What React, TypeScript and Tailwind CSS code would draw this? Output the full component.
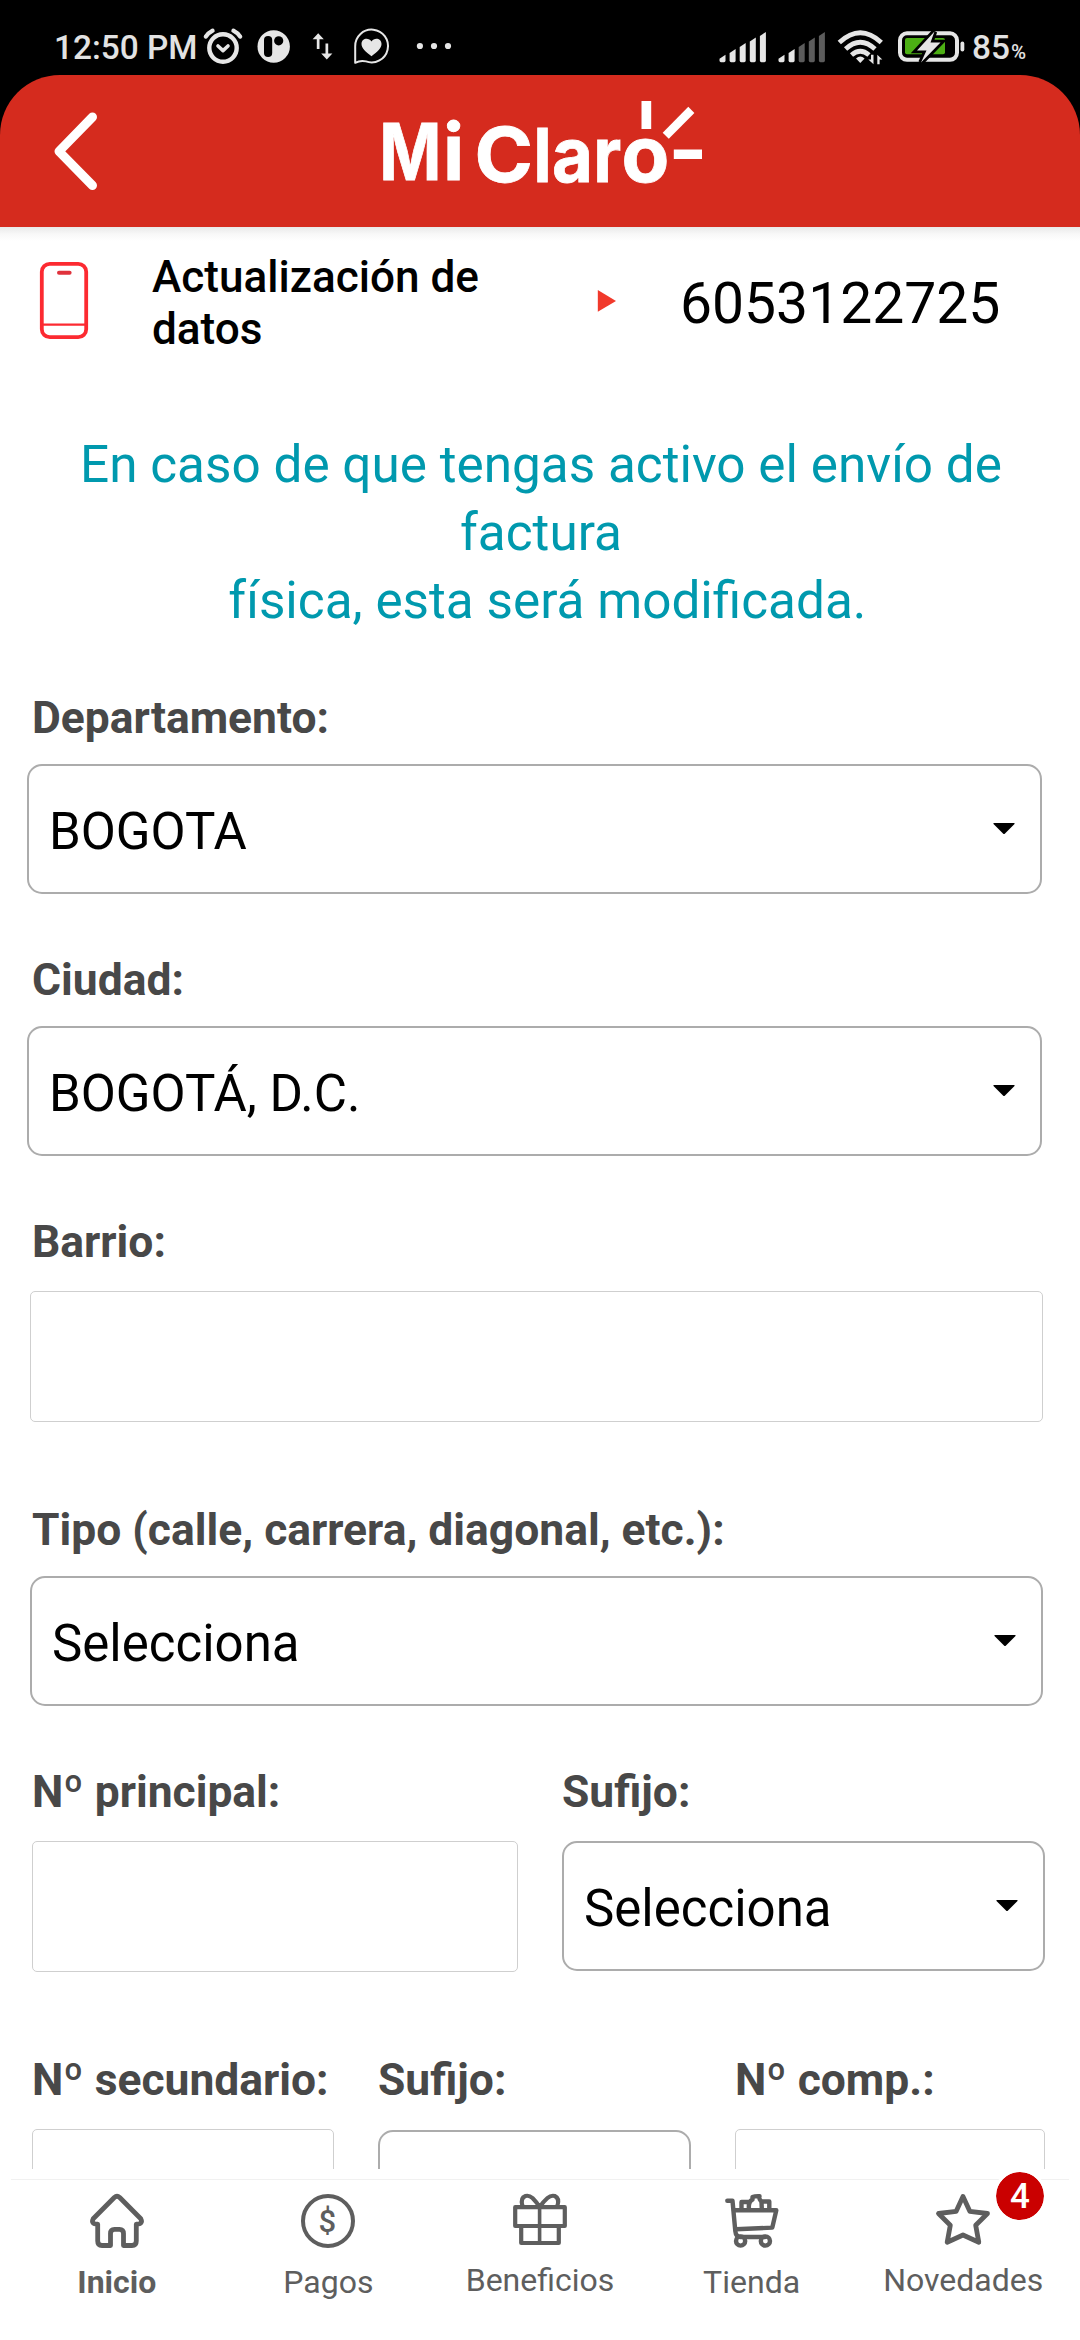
import React from "react";

function StatusIconsLeft() {
  return (
    <svg className="block shrink-0" width="256" height="50" viewBox="200 20 256 50" fill="none">
      <circle cx="223" cy="48" r="13.7" stroke="#e6e6e6" strokeWidth="4.4" />
      <path d="M218 46l5 4.6 5-4.6" stroke="#e6e6e6" strokeWidth="3.6" strokeLinecap="round" strokeLinejoin="round" />
      <path d="M205.8 36.6Q208 33 212.6 30.6M240.2 36.6Q238 33 233.4 30.6" stroke="#e6e6e6" strokeWidth="4.2" strokeLinecap="round" />
      <circle cx="273.7" cy="46.5" r="16.2" fill="#e6e6e6" />
      <rect x="264" y="36" width="8.2" height="21" rx="4.1" fill="#000" />
      <circle cx="278.7" cy="40.8" r="4.6" fill="#000" />
      <path d="M318.2 33.2l5.6 6h-4.3V49h-2.7v-9.8h-4.2zM326.8 59.4l-5.6-6h4.3V43.6h2.7v9.8h4.2z" fill="#e6e6e6" />
      <path d="M355.2 62.8V46.3A16.4 16.4 0 1 1 366 61.4Q360.5 60 355.2 62.8z" stroke="#e6e6e6" strokeWidth="2" strokeLinejoin="round" />
      <path d="M371.5 56.2c-6-4.6-10-8-10-12.2 0-6 7.3-6.7 10-2.6 2.7-4.1 10-3.4 10 2.6 0 4.2-4 7.6-10 12.2z" fill="#e6e6e6" />
      <circle cx="419.9" cy="46" r="3.1" fill="#e6e6e6" />
      <circle cx="434" cy="46" r="3.1" fill="#e6e6e6" />
      <circle cx="448" cy="46" r="3.1" fill="#e6e6e6" />
    </svg>
  );
}

const bars = [54.7, 49, 43, 37.5, 32];

function Signal({ x, lit }: { x: number; lit: number }) {
  return (
    <>
      {bars.map((top, i) => {
        const l = x + i * 10.1;
        return (
          <path
            key={top}
            d={`M${l} ${top + 4}L${l + 6} ${top}V60.5Q${l + 6} 62.2 ${l + 4.5} 62.2H${l + 1.5}Q${l} 62.2 ${l} 60.5Z`}
            fill={i < lit ? "#e6e6e6" : "#5c5c5c"}
          />
        );
      })}
    </>
  );
}

function StatusIconsRight() {
  return (
    <svg className="block shrink-0" width="252" height="50" viewBox="716 20 252 50" fill="none">
      <Signal x={719.5} lit={5} />
      <Signal x={778.5} lit={2} />
      <g stroke="#e6e6e6" strokeWidth="4.8">
        <path d="M839.3 42.5Q860.3 23 881.3 42.5" />
        <path d="M845.6 49Q860.3 35.5 875 49" />
        <path d="M851.5 55Q860.3 47.5 869 55" />
      </g>
      <path d="M856 58.5Q860.3 54.5 864.6 58.5L860.3 63z" fill="#e6e6e6" />
      <path d="M873.5 54.8V64.3L868.3 59.6H871V54.8zM877.3 64.3V54.8l5 4.7h-2.7v4.8z" fill="#e6e6e6" />
      <rect x="900" y="33.3" width="57" height="26.5" rx="7" stroke="#e6e6e6" strokeWidth="4" />
      <rect x="960.5" y="41.5" width="3.8" height="10" rx="1.9" fill="#e6e6e6" />
      <rect x="905" y="38" width="40" height="16.2" rx="2" fill="#4caf14" />
      <path
        d="M934.5 31.5L917 50.5h9.5L921 62.5 940.5 42.5h-10z"
        fill="#e6e6e6"
        stroke="#000"
        strokeWidth="5.5"
        paintOrder="stroke"
      />
    </svg>
  );
}

function BackIcon() {
  return (
    <svg className="block" width="46" height="80" viewBox="52 112 46 80" fill="none">
      <path d="M92.5 117L59 151.3 92.5 185.5" stroke="#fff" strokeWidth="9" strokeLinecap="round" strokeLinejoin="round" />
    </svg>
  );
}

function Logo() {
  return (
    <svg className="block overflow-visible" width="330" height="90" viewBox="378 101 330 90" fill="#fff">
      <g style={{ fontFamily: "Inter, sans-serif" }} fontWeight="700" stroke="#fff" strokeWidth="0.8">
        <text x="379.3" y="180" fontSize="78" textLength="62.2" lengthAdjust="spacingAndGlyphs">M</text>
        <text x="443" y="180" fontSize="78">i</text>
        <text x="474.5" y="181.6" fontSize="75.5" textLength="58.5" lengthAdjust="spacingAndGlyphs">C</text>
        <text x="533.5" y="182" fontSize="74.5" textLength="18" lengthAdjust="spacingAndGlyphs">l</text>
        <text x="552" y="181.8" fontSize="76.5" textLength="41" lengthAdjust="spacingAndGlyphs">a</text>
        <text x="593.3" y="182" fontSize="76.5" textLength="28" lengthAdjust="spacingAndGlyphs">r</text>
        <text x="621.5" y="181.8" fontSize="78">o</text>
      </g>
      <rect x="641.5" y="101" width="9.7" height="28" />
      <path d="M662.7 132.8L688.3 106.8 694.4 113 668.8 138.8z" />
      <rect x="673.8" y="149.5" width="28.2" height="9.5" />
    </svg>
  );
}

function PhoneIcon() {
  return (
    <svg className="block" width="50" height="80" viewBox="39 261 50 80" fill="none" stroke="#fc2a31">
      <rect x="41.8" y="263.8" width="44.4" height="73.4" rx="8" strokeWidth="3.8" />
      <path d="M42 324.6H86" strokeWidth="2.4" />
      <path d="M59 272.8H69.6" stroke="#e0323c" strokeWidth="4" strokeLinecap="round" />
    </svg>
  );
}

function Caret() {
  return (
    <svg className="absolute right-[25px] top-[56.5px] block" width="22" height="12" viewBox="0 0 22 12">
      <path d="M0.5 0H21.5V1L12 10.5Q11 11.5 10 10.5L0.5 1z" fill="#000" />
    </svg>
  );
}

function SelectBox({ value, className = "" }: { value: string; className?: string }) {
  return (
    <div className={`relative flex h-[130px] items-center rounded-[15px] border-2 border-[#acacac] bg-white pl-[20px] ${className}`}>
      <span className="mt-[6px] text-[51px] leading-[60px] text-black">{value}</span>
      <Caret />
    </div>
  );
}

function InputBox({ className = "" }: { className?: string }) {
  return <div className={`h-[131px] rounded-[5px] border border-[#cfcfcf] bg-white ${className}`} />;
}

function Label({ children }: { children: React.ReactNode }) {
  return <div className="h-[52px] whitespace-nowrap text-[44.4px] font-bold leading-[52px] text-[#484848]">{children}</div>;
}

function HomeIcon() {
  return (
    <svg className="block" width="58" height="58" viewBox="88 2192 58 58" fill="none" stroke="#5e5e5e" strokeWidth="4.8" strokeLinejoin="round">
      <path d="M114.3 2197.5Q117 2195 119.7 2197.5L140.8 2218.8Q143.5 2224 136.3 2224.2V2241Q136.3 2245.5 132 2245.5H123.5V2233.5Q123.5 2229.3 119.5 2229.3H114.5Q110.5 2229.3 110.5 2233.5V2245.5H102Q97.7 2245.5 97.7 2241V2224.2Q90.5 2224 93.2 2218.8z" />
    </svg>
  );
}

function PayIcon() {
  return (
    <span className="flex h-[58px] w-[58px] items-center justify-center">
      <span className="flex h-[54px] w-[54px] items-center justify-center rounded-full border-[4.6px] border-[#5e5e5e] text-[31px] font-medium leading-none text-[#5e5e5e]">
        <span className="-ml-[2px]">$</span>
      </span>
    </span>
  );
}

function GiftIcon() {
  return (
    <svg className="block" width="58" height="58" viewBox="511 2192 58 58" fill="none" stroke="#5e5e5e" strokeWidth="4.2" strokeLinejoin="round">
      <path d="M515.2 2207.2H564.8V2226H515.2z" />
      <path d="M521.2 2226V2243H558.8V2226" />
      <path d="M539.6 2206V2243" strokeWidth="3.6" />
      <path d="M522.5 2206Q520 2198 525.5 2196Q529 2195 532.5 2198Q536.5 2202 539.6 2207Q543.5 2201.5 547.5 2198Q551 2195 554.7 2196Q560 2198.5 557.3 2206" />
    </svg>
  );
}

function CartIcon() {
  return (
    <svg className="block" width="58" height="58" viewBox="722 2192 58 58" fill="none" stroke="#5e5e5e" strokeWidth="4.4" strokeLinejoin="round" strokeLinecap="round">
      <path d="M726.3 2200.8H731.5L734.3 2231Q734.8 2236.8 739.5 2237H764" />
      <path d="M733 2210.2H775.3L771.3 2227.6 735 2229.3" />
      <path d="M740.5 2209V2202H747.5M748 2209Q747 2202 751.5 2199.5V2197Q754 2196 758.5 2196.2Q757.5 2198.5 760.5 2202L760.8 2209M761.5 2201.5H768.3V2209" />
      <circle cx="739.6" cy="2241" r="4.6" />
      <circle cx="764.4" cy="2241" r="4.6" />
    </svg>
  );
}

function StarIcon() {
  return (
    <svg className="block" width="58" height="58" viewBox="934 2192 58 58" fill="none" stroke="#5e5e5e" strokeWidth="4.8" strokeLinejoin="round">
      <path d="M963 2196.5L969.8 2211.3 987.5 2213.5 975.7 2225.3 978.8 2242.3 963 2235 947.2 2242.3 950.3 2225.3 938.5 2213.5 956.2 2211.3z" />
    </svg>
  );
}

const tabs = [
  { label: "Inicio", icon: <HomeIcon />, labelClass: "mt-[4px] font-bold", badge: "" },
  { label: "Pagos", icon: <PayIcon />, labelClass: "mt-[4px]", badge: "" },
  { label: "Beneficios", icon: <GiftIcon />, labelClass: "mt-[2px]", badge: "" },
  { label: "Tienda", icon: <CartIcon />, labelClass: "mt-[4px]", badge: "" },
  { label: "Novedades", icon: <StarIcon />, labelClass: "mt-[2px]", badge: "4" },
];

export default function App() {
  return (
    <div className="flex h-[2340px] w-[1080px] flex-col overflow-hidden bg-white font-[Roboto,sans-serif]">
      <div className="shrink-0 bg-black">
        <div className="flex h-[75px] pt-[20px]">
          <div className="ml-[54px] w-[146px] whitespace-nowrap text-[33.4px] font-medium leading-[56px] text-[#e2e2e2]">12:50 PM</div>
          <StatusIconsLeft />
          <div className="flex-1" />
          <StatusIconsRight />
          <div className="w-[112px] whitespace-nowrap pl-[4px] text-[33.4px] font-medium leading-[56px] text-[#e2e2e2]">
            85<span className="ml-[1px] text-[20.5px]">%</span>
          </div>
        </div>
        <header className="flex h-[152px] items-start rounded-t-[60px] bg-[#d52b1e]">
          <div className="ml-[52px] mt-[37px] w-[326px]">
            <BackIcon />
          </div>
          <div className="mt-[26px]">
            <Logo />
          </div>
        </header>
      </div>
      <div className="h-[14px] shrink-0 bg-gradient-to-b from-[#e9e9e9] via-[#f8f8f8] to-white" />

      <main className="h-[1928px] shrink-0 overflow-hidden">
        <div className="flex h-[126px]">
          <div className="ml-[39px] mt-[20px] w-[113px]">
            <PhoneIcon />
          </div>
          <div className="mt-[10px] w-[445px] text-[44.1px] font-medium leading-[52px] text-black">
            Actualización de
            <br />
            datos
          </div>
          <svg className="mt-[49px] block" width="20" height="22" viewBox="0 0 20 22">
            <path d="M0.8 0L19 10.9 0.8 21.7z" fill="#f1392b" />
          </svg>
          <div className="ml-[63px] mt-[29px] text-[57px] leading-[68px] text-black">6053122725</div>
        </div>

        <p className="mt-[64px] h-[204px] whitespace-nowrap pl-[2px] text-center text-[51.3px] leading-[68px] text-[#0099ae]">
          En caso de que tengas activo el envío de
          <br />
          factura
          <br />
          &nbsp;física, esta será modificada.
        </p>

        <section className="mt-[57px]">
          <div className="h-[262px]">
            <div className="pl-[32px]"><Label>Departamento:</Label></div>
            <SelectBox value="BOGOTA" className="ml-[27px] mt-[20px] w-[1015px]" />
          </div>
          <div className="h-[262px]">
            <div className="pl-[32px]"><Label>Ciudad:</Label></div>
            <SelectBox value="BOGOTÁ, D.C." className="ml-[27px] mt-[20px] w-[1015px]" />
          </div>
          <div className="h-[288px]">
            <div className="pl-[32px]"><Label>Barrio:</Label></div>
            <InputBox className="ml-[30px] mt-[23px] w-[1013px]" />
          </div>
          <div className="h-[262px]">
            <div className="pl-[32px]"><Label>Tipo (calle, carrera, diagonal, etc.):</Label></div>
            <SelectBox value="Selecciona" className="ml-[30px] mt-[20px] w-[1013px]" />
          </div>
          <div className="flex h-[288px] gap-[44px] pl-[32px]">
            <div className="w-[486px]">
              <Label>Nº principal:</Label>
              <InputBox className="mt-[23px]" />
            </div>
            <div className="w-[483px]">
              <Label>Sufijo:</Label>
              <SelectBox value="Selecciona" className="mt-[23px]" />
            </div>
          </div>
          <div className="flex gap-[44px] pl-[32px]">
            <div className="w-[302px]">
              <Label>Nº secundario:</Label>
              <InputBox className="mt-[23px]" />
            </div>
            <div className="w-[313px]">
              <Label>Sufijo:</Label>
              <SelectBox value="" className="mt-[24px]" />
            </div>
            <div className="w-[310px]">
              <Label>Nº comp.:</Label>
              <InputBox className="mt-[23px]" />
            </div>
          </div>
        </section>
      </main>

      <nav className="flex-1 bg-white px-[11px] pt-[10px]">
        <div className="grid grid-cols-5 border-t border-[#f1f1f1]">
          {tabs.map((t) => (
            <div key={t.label} className="relative flex flex-col items-center pt-[12px]">
              {t.icon}
              <span className={`text-[32px] leading-[57px] text-[#5e5e5e] ${t.labelClass}`}>{t.label}</span>
              {t.badge && (
                <span className="absolute -top-[8px] right-[25px] flex h-[48px] w-[48px] items-center justify-center rounded-full bg-[#ca0000] text-[35px] font-medium leading-none text-white outline-[3px] outline-white">
                  {t.badge}
                </span>
              )}
            </div>
          ))}
        </div>
      </nav>
    </div>
  );
}
